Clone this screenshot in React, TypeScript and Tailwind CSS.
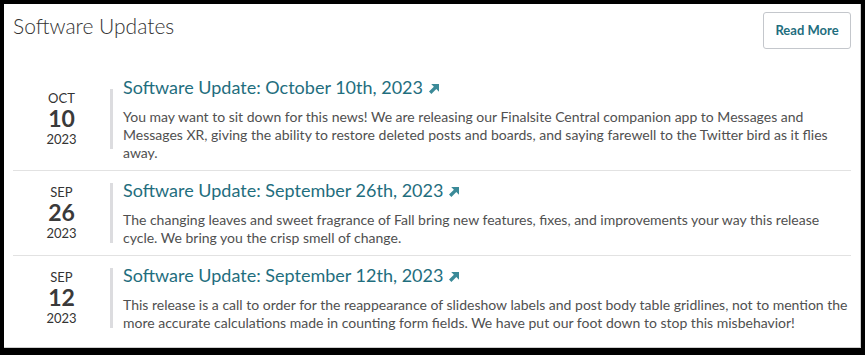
const updates = [
  {
    month: 'OCT',
    day: '10',
    year: '2023',
    title: 'Software Update: October 10th, 2023',
    body: 'You may want to sit down for this news! We are releasing our Finalsite Central companion app to Messages and Messages XR, giving the ability to restore deleted posts and boards, and saying farewell to the Twitter bird as it flies away.',
  },
  {
    month: 'SEP',
    day: '26',
    year: '2023',
    title: 'Software Update: September 26th, 2023',
    body: 'The changing leaves and sweet fragrance of Fall bring new features, fixes, and improvements your way this release cycle. We bring you the crisp smell of change.',
  },
  {
    month: 'SEP',
    day: '12',
    year: '2023',
    title: 'Software Update: September 12th, 2023',
    body: 'This release is a call to order for the reappearance of slideshow labels and post body table gridlines, not to mention the more accurate calculations made in counting form fields. We have put our foot down to stop this misbehavior!',
  },
];

function ArrowIcon() {
  return (
    <svg viewBox="0 0 12 12" className="inline-block w-[12px] h-[12px] ml-[5px] align-[-1px]" fill="#3b8a98">
      <path d="M3.2 1h7.8v7.8L8.3 6.1 3.4 11 1 8.6 5.9 3.7z" />
    </svg>
  );
}

interface UpdateRowProps {
  month: string;
  day: string;
  year: string;
  title: string;
  body: string;
  last: boolean;
}

function UpdateRow({ month, day, year, title, body, last }: UpdateRowProps) {
  return (
    <div className={`flex items-center pt-[7px] pb-[8px] ${last ? '' : 'border-b border-[#e2e2e2]'}`}>
      <div className="w-[100px] shrink-0 flex flex-col items-center text-[#333] border-r-[3px] border-[#dcdcdf] mr-[10px]">
        <div className="text-[13px] leading-[18px]">{month}</div>
        <div className="text-[23px] leading-[23px] font-bold text-[#3a3a3a]">{day}</div>
        <div className="text-[13px] leading-[19px]">{year}</div>
      </div>
      <div className="flex-1">
        <a href="#" className="block text-[18px] leading-[24px] text-[#1f6e7e]">
          {title}
          <ArrowIcon />
        </a>
        <p className="mt-[9px] text-[14px] leading-[18px] text-[#505050]">{body}</p>
      </div>
    </div>
  );
}

export default function App() {
  return (
    <div className="w-[865px] h-[355px] bg-black pt-[4px] pl-[4px]" style={{ fontFamily: 'Lato, "Noto Sans", sans-serif' }}>
      <div className="w-[857px] h-[344px] bg-white border-r border-b border-[#cfcfcf] px-[9px] pt-[8px]">
        <div className="flex items-start justify-between">
          <h2 className="text-[21px] leading-[28px] font-light text-[#333]">Software Updates</h2>
          <button className="w-[88px] h-[37px] rounded-[3px] border border-[#c4c7cc] text-[13px] font-bold text-[#1f6e7e]">
            Read More
          </button>
        </div>
        <div className="mt-[19px]">
          {updates.map((u, i) => (
            <UpdateRow key={u.title} {...u} last={i === updates.length - 1} />
          ))}
        </div>
      </div>
    </div>
  );
}
